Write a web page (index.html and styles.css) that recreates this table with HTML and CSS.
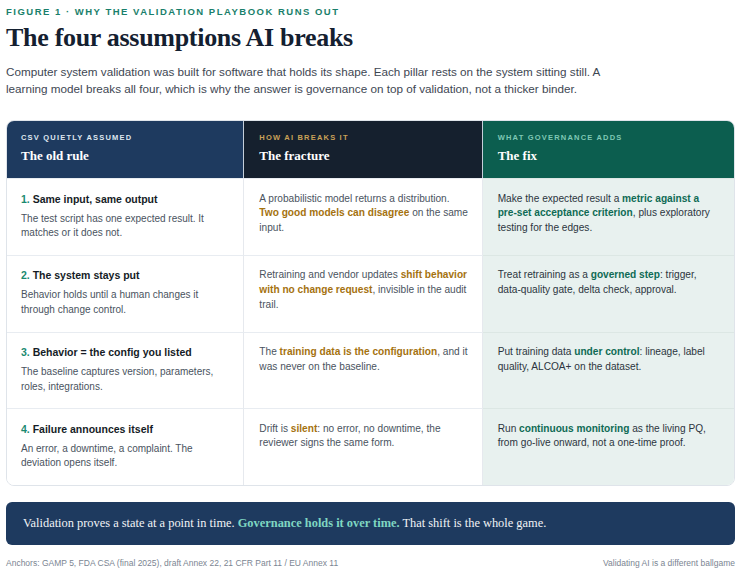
FILE: index.html
```html
<!DOCTYPE html>
<html lang="en">
<head>
<meta charset="utf-8">
<title>The four assumptions AI breaks</title>
<link rel="stylesheet" href="styles.css">
</head>
<body>
<div class="page">
  <div class="eyebrow">FIGURE 1 · WHY THE VALIDATION PLAYBOOK RUNS OUT</div>
  <h1 class="title">The four assumptions AI breaks</h1>
  <p class="lede">Computer system validation was built for software that holds its shape. Each pillar rests on the system sitting still. A learning model breaks all four, which is why the answer is governance on top of validation, not a thicker binder.</p>

  <div class="table">
    <div class="head head-old">
      <div class="label">CSV QUIETLY ASSUMED</div>
      <div class="htitle">The old rule</div>
    </div>
    <div class="head head-break">
      <div class="label">HOW AI BREAKS IT</div>
      <div class="htitle">The fracture</div>
    </div>
    <div class="head head-fix">
      <div class="label">WHAT GOVERNANCE ADDS</div>
      <div class="htitle">The fix</div>
    </div>

    <div class="cell old">
      <div class="rtitle"><span class="num">1.</span> Same input, same output</div>
      <div class="desc">The test script has one expected result. It matches or it does not.</div>
    </div>
    <div class="cell brk">A probabilistic model returns a distribution. <b class="amber">Two good models can disagree</b> on the same input.</div>
    <div class="cell fix">Make the expected result a <b class="green">metric against a pre-set acceptance criterion</b>, plus exploratory testing for the edges.</div>

    <div class="cell old">
      <div class="rtitle"><span class="num">2.</span> The system stays put</div>
      <div class="desc">Behavior holds until a human changes it through change control.</div>
    </div>
    <div class="cell brk">Retraining and vendor updates <b class="amber">shift behavior with no change request</b>, invisible in the audit trail.</div>
    <div class="cell fix">Treat retraining as a <b class="green">governed step</b>: trigger, data-quality gate, delta check, approval.</div>

    <div class="cell old">
      <div class="rtitle"><span class="num">3.</span> Behavior = the config you listed</div>
      <div class="desc">The baseline captures version, parameters, roles, integrations.</div>
    </div>
    <div class="cell brk">The <b class="amber">training data is the configuration</b>, and it was never on the baseline.</div>
    <div class="cell fix">Put training data <b class="green">under control</b>: lineage, label quality, ALCOA+ on the dataset.</div>

    <div class="cell old">
      <div class="rtitle"><span class="num">4.</span> Failure announces itself</div>
      <div class="desc">An error, a downtime, a complaint. The deviation opens itself.</div>
    </div>
    <div class="cell brk">Drift is <b class="amber">silent</b>: no error, no downtime, the reviewer signs the same form.</div>
    <div class="cell fix">Run <b class="green">continuous monitoring</b> as the living PQ, from go-live onward, not a one-time proof.</div>
  </div>

  <div class="banner">Validation proves a state at a point in time. <b class="hl">Governance holds it over time.</b> That shift is the whole game.</div>

  <div class="footer">
    <span>Anchors: GAMP 5, FDA CSA (final 2025), draft Annex 22, 21 CFR Part 11 / EU Annex 11</span>
    <span>Validating AI is a different ballgame</span>
  </div>
</div>
</body>
</html>
```

FILE: styles.css
```css
* { box-sizing: border-box; }

html, body {
  margin: 0;
  padding: 0;
  background: #ffffff;
}

body {
  font-family: "Liberation Sans", Arial, sans-serif;
  color: #1f2833;
}

.page {
  padding: 5px 8px 0 6px;
}

.eyebrow {
  font-size: 9.5px;
  line-height: 13px;
  font-weight: 700;
  letter-spacing: 1.5px;
  color: #1a7f6b;
}

.title {
  margin: 4px 0 0;
  font-family: "Liberation Serif", "Times New Roman", serif;
  font-size: 26px;
  line-height: 32px;
  font-weight: 700;
  letter-spacing: -0.3px;
  color: #142030;
}

.lede {
  margin: 9px 0 0;
  max-width: 610px;
  font-size: 11.7px;
  line-height: 17px;
  color: #3e4753;
}

.table {
  margin-top: 23px;
  display: grid;
  grid-template-columns: 238fr 239fr 252fr;
  border: 1px solid #dfe4ea;
  border-radius: 8px;
  overflow: hidden;
}

.head {
  padding: 12px 14px 14px;
  border-right: 1px solid #c5cfda;
}

.head-break, .head-fix { padding-left: 15px; }

.head-old { background: #1e3a5f; }
.head-break { background: #15202e; }
.head-fix { background: #0c5e4f; border-right: none; }

.label {
  font-size: 7.5px;
  line-height: 10px;
  font-weight: 700;
  letter-spacing: 1.2px;
}

.head-old .label { color: #dfe6ef; }
.head-break .label { color: #c9a158; }
.head-fix .label { color: #7fc8b4; }

.htitle {
  margin-top: 5px;
  font-family: "Liberation Serif", "Times New Roman", serif;
  font-size: 13px;
  line-height: 16px;
  font-weight: 700;
  color: #ffffff;
}

.cell {
  padding: 12.5px 13px 14.25px 15px;
  border-top: 1px solid #e8ecf1;
  font-size: 10.15px;
  line-height: 14.7px;
  color: #4a5360;
}

.cell.old {
  padding-left: 14px;
}

.cell.old, .cell.brk {
  border-right: 1px solid #e6e9ee;
  background: #ffffff;
}

.cell.fix {
  padding-right: 22px;
  background: #e8f1ef;
  color: #2c3540;
  border-top-color: #dce7e4;
}

.rtitle {
  font-size: 10.5px;
  line-height: 15px;
  font-weight: 700;
  color: #151c26;
}

.num { color: #1a8a70; }

.desc {
  margin-top: 5px;
  font-size: 10px;
  line-height: 14.5px;
  color: #4a5360;
}

.amber { color: #a5720f; }
.green { color: #0f6b55; }

.banner {
  margin-top: 16px;
  height: 43px;
  padding: 0 17px;
  background: #1e3a5f;
  border-radius: 6px;
  font-family: "Liberation Serif", "Times New Roman", serif;
  font-size: 12.4px;
  line-height: 43px;
  color: #f1f3f6;
}

.hl { color: #7fd6c2; }

.footer {
  margin-top: 12px;
  display: flex;
  justify-content: space-between;
  font-size: 8.5px;
  line-height: 12px;
  color: #7b8592;
}
```
